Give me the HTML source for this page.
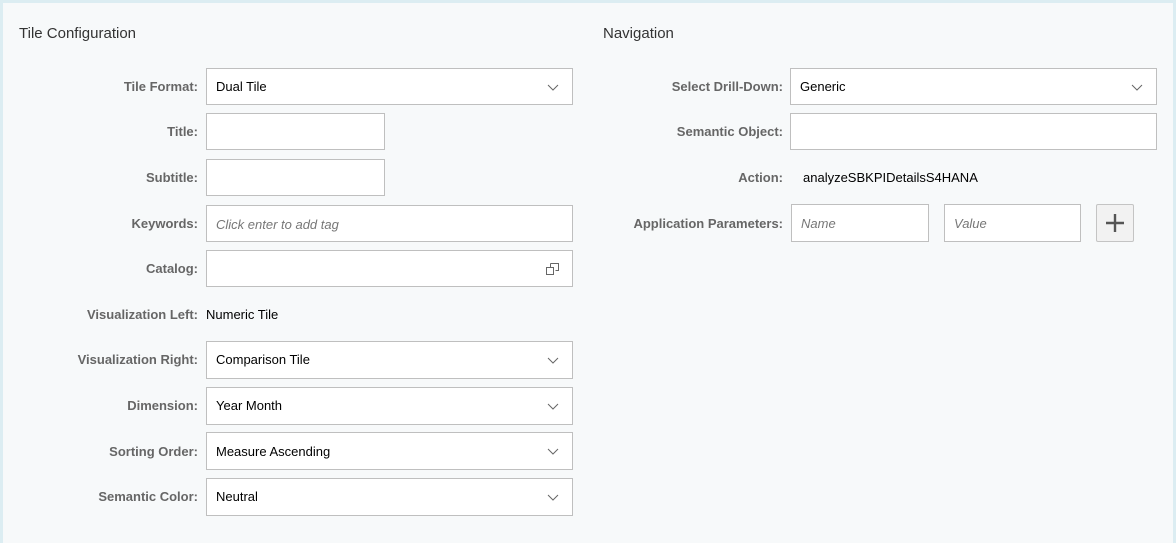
<!DOCTYPE html>
<html><head><style>
body{margin:0;width:1176px;height:535px;background:#dcedf2;font-family:"Liberation Sans",sans-serif;overflow:hidden;position:relative}
.panel{position:absolute;left:3px;top:3px;width:1170px;height:540px;background:#f7f9fa}
.h{position:absolute;font-size:15px;color:#333}
.lbl{position:absolute;font-size:13px;font-weight:bold;color:#666;text-align:right}
.f{position:absolute;background:#fff;border:1px solid #bfbfbf;box-sizing:border-box;font-size:13px;color:#000;padding-left:9px;line-height:35px}
.ph{color:#777;font-style:italic}
.chev{position:absolute;right:13px;top:15px}
.txt{position:absolute;font-size:13px;color:#000}
</style></head><body>
<div class="panel"></div>
<div class="h" style="left:19px;top:25px">Tile Configuration</div>
<div class="h" style="left:603px;top:25px">Navigation</div>

<div class="lbl" style="right:978px;top:79px">Tile Format:</div>
<div class="f" style="left:206px;top:68px;width:367px;height:37px">Dual Tile<svg class="chev" width="12" height="8"><path d="M1 1l5 5 5-5" fill="none" stroke="#666" stroke-width="1"/></svg></div>
<div class="lbl" style="right:978px;top:124px">Title:</div>
<div class="f" style="left:206px;top:113px;width:179px;height:37px"></div>
<div class="lbl" style="right:978px;top:170px">Subtitle:</div>
<div class="f" style="left:206px;top:159px;width:179px;height:37px"></div>
<div class="lbl" style="right:978px;top:216px">Keywords:</div>
<div class="f ph" style="left:206px;top:205px;width:367px;height:37px;line-height:37px">Click enter to add tag</div>
<div class="lbl" style="right:978px;top:261px">Catalog:</div>
<div class="f" style="left:206px;top:250px;width:367px;height:37px"><svg style="position:absolute;right:13px;top:12px" width="13" height="12"><path d="M4.5 0.5h8v7h-3M0.5 4.5h7v7h-7z" fill="none" stroke="#666"/><path d="M4.5 0.5v3.5" stroke="#666"/></svg></div>
<div class="lbl" style="right:978px;top:307px">Visualization Left:</div>
<div class="txt" style="left:206px;top:307px">Numeric Tile</div>
<div class="lbl" style="right:978px;top:352px">Visualization Right:</div>
<div class="f" style="left:206px;top:341px;width:367px;height:38px">Comparison Tile<svg class="chev" width="12" height="8"><path d="M1 1l5 5 5-5" fill="none" stroke="#666"/></svg></div>
<div class="lbl" style="right:978px;top:398px">Dimension:</div>
<div class="f" style="left:206px;top:387px;width:367px;height:38px">Year Month<svg class="chev" width="12" height="8"><path d="M1 1l5 5 5-5" fill="none" stroke="#666"/></svg></div>
<div class="lbl" style="right:978px;top:444px">Sorting Order:</div>
<div class="f" style="left:206px;top:432px;width:367px;height:38px;line-height:37px">Measure Ascending<svg class="chev" width="12" height="8"><path d="M1 1l5 5 5-5" fill="none" stroke="#666"/></svg></div>
<div class="lbl" style="right:978px;top:489px">Semantic Color:</div>
<div class="f" style="left:206px;top:478px;width:367px;height:38px">Neutral<svg class="chev" width="12" height="8"><path d="M1 1l5 5 5-5" fill="none" stroke="#666"/></svg></div>

<div class="lbl" style="right:393px;top:79px">Select Drill-Down:</div>
<div class="f" style="left:790px;top:68px;width:367px;height:37px">Generic<svg class="chev" width="12" height="8"><path d="M1 1l5 5 5-5" fill="none" stroke="#666"/></svg></div>
<div class="lbl" style="right:393px;top:124px">Semantic Object:</div>
<div class="f" style="left:790px;top:113px;width:367px;height:37px"></div>
<div class="lbl" style="right:393px;top:170px">Action:</div>
<div class="txt" style="left:803px;top:170px">analyzeSBKPIDetailsS4HANA</div>
<div class="lbl" style="right:393px;top:216px">Application Parameters:</div>
<div class="f ph" style="left:791px;top:204px;width:138px;height:38px;line-height:37px">Name</div>
<div class="f ph" style="left:944px;top:204px;width:137px;height:38px;line-height:37px">Value</div>
<div style="position:absolute;left:1096px;top:204px;width:38px;height:38px;box-sizing:border-box;border:1px solid #c4c4c4;border-radius:2px;background:#f2f2f2"><svg style="position:absolute;left:9px;top:9px" width="18" height="18"><path d="M9 0v18M0 9h18" stroke="#555" stroke-width="2.4"/></svg></div>
</body></html>
